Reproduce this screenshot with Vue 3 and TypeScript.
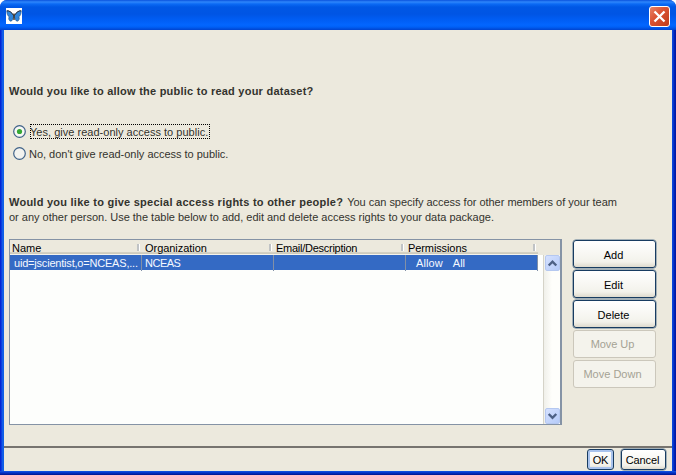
<script setup lang="ts">
import { ref } from 'vue'

interface Column {
  key: string
  label: string
}

const columns: Column[] = [
  { key: 'name', label: 'Name' },
  { key: 'org', label: 'Organization' },
  { key: 'email', label: 'Email/Description' },
  { key: 'perm', label: 'Permissions' },
]

const actions = [
  { label: 'Add', cls: 'add', disabled: false },
  { label: 'Edit', cls: 'edit', disabled: false },
  { label: 'Delete', cls: 'delete', disabled: false },
  { label: 'Move Up', cls: 'up', disabled: true },
  { label: 'Move Down', cls: 'down', disabled: true },
]

const publicAccess = ref(true)
</script>

<template>
  <div class="window">
    <header class="titlebar">
      <svg class="logo" width="16" height="16" viewBox="0 0 16 16">
        <rect width="16" height="16" fill="#fff" />
        <path d="M7.600 7.500C6 4.500 3 2.400 .8 2.800C.7 5 1.500 8 3.200 8.800C2.200 10.500 3 13 4.800 13.200C6.400 13 7.300 10.500 7.700 8.500H8.300C8.700 10.500 9.600 13 11.200 13.200C13 13 13.800 10.500 12.800 8.800C14.500 8 15.300 5 15.200 2.800C13 2.400 10 4.500 8.400 7.500Z" fill="#2f86dc" stroke="#27548c" stroke-width=".7" />
        <path d="M.8 2.800C3 2.400 6 4.500 7.600 7.500M15.200 2.800C13 2.400 10 4.500 8.400 7.500" fill="none" stroke="#35363c" stroke-width="1" />
        <path d="M8 5.500V12" stroke="#40301f" stroke-width="1.300" />
      </svg>
      <button class="close" aria-label="Close">
        <svg width="21" height="21" viewBox="0 0 21 21">
          <defs>
            <linearGradient id="red" x1="0" y1="0" x2="1" y2="1">
              <stop offset="0" stop-color="#e8866b" />
              <stop offset=".4" stop-color="#dc5535" />
              <stop offset="1" stop-color="#bd3a18" />
            </linearGradient>
          </defs>
          <rect x=".5" y=".5" width="20" height="20" rx="2.500" fill="url(#red)" stroke="#fff" />
          <path d="M5.500 5.500L15.500 15.500M15.500 5.500L5.500 15.500" stroke="#fff" stroke-width="2.300" />
        </svg>
      </button>
    </header>

    <main class="body">
      <h1 class="question">Would you like to allow the public to read your dataset?</h1>

      <div class="choices">
        <div class="choice" @click="publicAccess = true">
          <svg class="radio" width="13" height="13" viewBox="0 0 13 13">
            <circle cx="6.500" cy="6.500" r="5.800" fill="#f8f8f5" stroke="#3f6288" stroke-width="1.200" />
            <circle v-if="publicAccess" cx="6.500" cy="6.500" r="2.600" fill="#35a834" />
          </svg>
          <span class="choice-text yes" :class="{ focused: publicAccess }">Yes, give read-only access to public.</span>
        </div>
        <div class="choice" @click="publicAccess = false">
          <svg class="radio" width="13" height="13" viewBox="0 0 13 13">
            <circle cx="6.500" cy="6.500" r="5.800" fill="#f3f3ef" stroke="#3f6288" stroke-width="1.200" />
            <circle v-if="!publicAccess" cx="6.500" cy="6.500" r="2.600" fill="#35a834" />
          </svg>
          <span class="choice-text no">No, don't give read-only access to public.</span>
        </div>
      </div>

      <div class="explain">
        <div><b class="special">Would you like to give special access rights to other people?</b> <span class="line1">You can specify access for other members of your team</span></div>
        <div><span class="line2">or any other person. Use the table below to add, edit and delete access rights to your data package.</span></div>
      </div>

      <div class="access">
        <div class="table">
          <div class="thead">
            <div v-for="c in columns" :key="c.key" class="th"><span :class="'h-' + c.key">{{ c.label }}</span></div>
          </div>
          <div class="tbody">
            <div class="rows">
              <div class="row">
                <div class="td first"><span class="v-name">uid=jscientist,o=NCEAS,...</span></div>
                <div class="td"><span class="v-org">NCEAS</span></div>
                <div class="td"></div>
                <div class="td perm"><span class="v-allow">Allow</span><span class="v-all">All</span></div>
              </div>
            </div>
            <div class="scrollbar">
              <div class="arrow"><svg width="15" height="16" viewBox="0 0 15 16"><path d="M3.700 10.500L7.500 6.700L11.300 10.500" fill="none" stroke="#4d6185" stroke-width="2.400" /></svg></div>
              <div class="arrow"><svg width="15" height="16" viewBox="0 0 15 16"><path d="M3.700 6L7.500 9.800L11.300 6" fill="none" stroke="#4d6185" stroke-width="2.400" /></svg></div>
            </div>
          </div>
        </div>
        <div class="actions">
          <button v-for="a in actions" :key="a.cls" class="btn" :disabled="a.disabled"><span :class="'b-' + a.cls">{{ a.label }}</span></button>
        </div>
      </div>
    </main>

    <footer class="footer">
      <button class="btn ok"><span class="b-ok">OK</span></button>
      <button class="btn cancel"><span class="b-cancel">Cancel</span></button>
    </footer>
  </div>
</template>

<style>
body { margin: 0; background: #fff; overflow: hidden; }
</style>

<style scoped>
* { box-sizing: border-box; }
.window {
  width: 676px; height: 475px; display: flex; flex-direction: column;
  border-radius: 7px 7px 0 0; padding: 0 4px 4px; background: linear-gradient(90deg, #0019cf 0, #0831d9 1px, #166aee 3px, #0855dd 4px, #0855dd 671px, #0a3fd8 673px, #0019a8 675px);
  font: 11px/15px "Liberation Sans", Arial, sans-serif; color: #33332d; overflow: hidden;
  position: relative; white-space: nowrap;
}
.window::after { content: ""; position: absolute; left: 0; right: 0; bottom: 0; height: 4px; background: linear-gradient(#1758e4, #0636cc 40%, #00138c); }
.titlebar {
  height: 30px; flex: none; margin: 0 -4px; padding: 2px 6px 0; display: flex; align-items: center; justify-content: space-between;
  background: linear-gradient(#0a52dd 0, #2e86fb 2px, #0b6af4 4px, #0057e5 7px, #0055e4 14px, #005cf2 19px, #0366ff 25px, #0060f6 27px, #0043cf 30px);
}
.logo { display: block; }
.close { border: 0; padding: 0; background: none; width: 21px; height: 21px; }
.close svg { display: block; }
.body { flex: 1; background: #ece9dd; padding: 54px 0 0 5px; min-height: 0; }
.question { margin: 0; font-size: 11px; line-height: 15px; height: 15px; letter-spacing: .236px; }
.choices { margin-top: 21px; }
.choice { display: flex; align-items: center; height: 22px; padding-left: 4px; }
.radio { flex: none; margin-right: 4px; }
.choice-text { height: 15px; line-height: 14px; border: 1px dotted transparent; padding: 0; }
.yes { padding-right: 1px; margin-left: 0; text-indent: -1px; letter-spacing: .02px; }
.no { margin-left: -2px; letter-spacing: -.02px; }
.focused { border-color: #000; }
.explain { margin-top: 31px; height: 30px; }
.special { letter-spacing: .25px; }
.line1 { letter-spacing: -.025px; margin-left: 1px; }
.line2 { letter-spacing: -.012px; }
.access { display: flex; margin-top: 14px; gap: 11px; }
.table { width: 553px; height: 186px; border: 1px solid #8593a5; border-right-width: 2px; background: #fdfefc; display: flex; flex-direction: column; color: #000; }
.thead { display: flex; height: 15px; flex: none; background: #ece9dd; }
.th { width: 132px; height: 15px; padding-left: 2px; line-height: 16px; position: relative; background: linear-gradient(transparent 12px, #d8d4c6 12px, #cbc8ba 14px, #f4f3ec 14px); }
.th::after { content: ""; position: absolute; right: 2px; top: 4px; height: 7px; width: 2px; background: #c0c3c5; border-right: 1px solid #fff; }
.h-org { letter-spacing: -.04px; padding-left: 1px; }
.h-email { letter-spacing: -.26px; }
.h-perm { letter-spacing: -.1px; }
.tbody { display: flex; flex: 1; min-height: 0; }
.rows { flex: 1; }
.row { display: flex; width: 528px; height: 15px; background: #346ac4; color: #f4f8ff; }
.td { width: 132px; height: 16px; padding-left: 3px; line-height: 17px; border-right: 1px solid #8290a6; }
.first { padding-left: 4px; }
.v-name { letter-spacing: -.2px; }
.v-org { letter-spacing: -.5px; }
.perm { padding-left: 10px; display: flex; gap: 10px; }
.v-allow { letter-spacing: .1px; }
.scrollbar { width: 17px; border-left: 1px solid #d5d3c8; background: linear-gradient(90deg, #f0f0ea, #fefefb 8px); display: flex; flex-direction: column; justify-content: space-between; padding: 0 0 0 1px; }
.arrow { width: 15px; height: 16px; border: 1px solid #b5c8f0; border-radius: 2px; background: linear-gradient(135deg, #d5e1ff, #b5cbf8); }
.arrow svg { display: block; margin: -1px; }
.actions { display: flex; flex-direction: column; gap: 2px; padding-top: 1px; }
.btn {
  width: 83px; height: 28px; padding: 2px 2px 0 0; border: 1px solid #183c61; border-radius: 3px; font: 11px/15px "Liberation Sans", Arial, sans-serif; color: #000;
  background: linear-gradient(#fff, #f3f2eb 80%, #dedace); box-shadow: 0 0 0 .5px #5b7891; white-space: nowrap; display: flex; align-items: center; justify-content: center;
}
.btn:disabled { color: #a4a294; border-color: #cbc7bb; background: #f4f3ec; box-shadow: none; padding: 0 4px 0 0; }
.b-up { letter-spacing: -.05px; }
.footer { height: 25px; flex: none; background: #ece9dd; border-top: 2px solid #77746f; display: flex; justify-content: flex-end; gap: 7px; padding: 1px 6px 0 0; }
.footer .btn { height: 21px; padding-top: 1px; }
.footer .ok { width: 27px; padding-right: 0; box-shadow: inset 0 0 0 2px #a9c3ed; }
.footer .cancel { width: 45px; }
.b-ok { letter-spacing: -.3px; }
.b-cancel { letter-spacing: -.1px; }
</style>
